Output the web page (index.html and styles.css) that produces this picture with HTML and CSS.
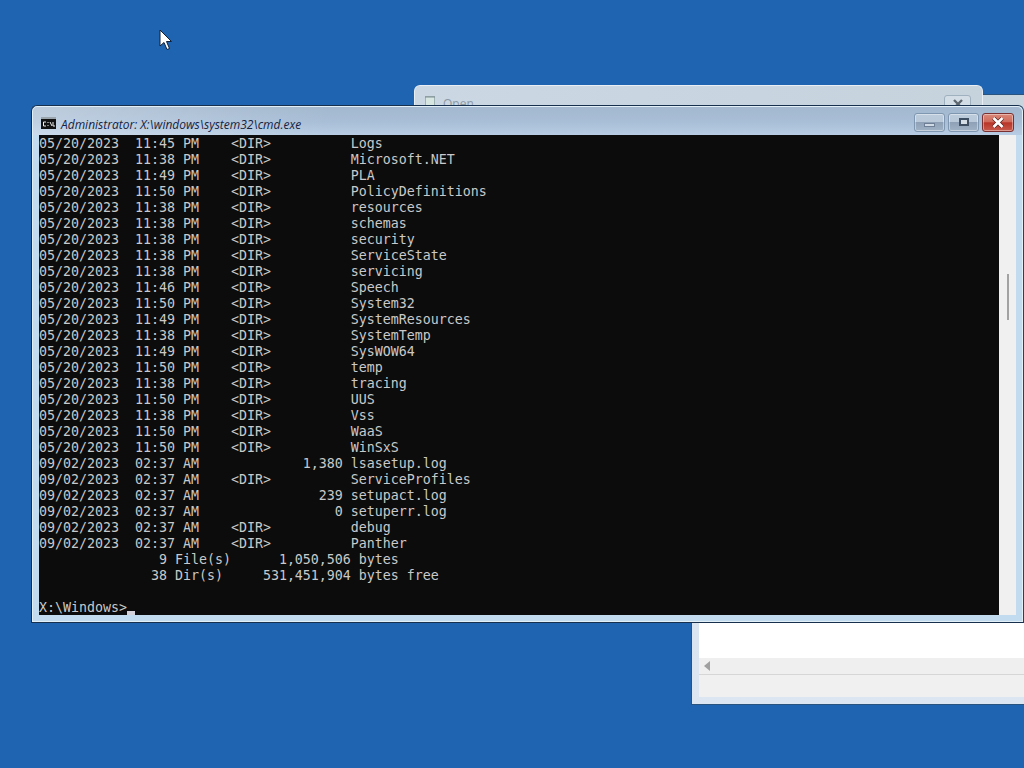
FILE: index.html
```html
<!DOCTYPE html>
<html lang="en">
<head>
<meta charset="utf-8">
<title>Administrator: X:\windows\system32\cmd.exe</title>
<link rel="stylesheet" href="styles.css">
</head>
<body>
<main class="desktop">
  <svg class="pointer" width="14" height="22" viewBox="0 0 14 22">
    <path d="M1 1V17L5 13.5L8 20.5L10.5 19.5L7.5 12.5H12.5Z" fill="#fff" stroke="#10203a" stroke-width="1"/>
  </svg>

  <section class="window back-window">
    <div class="back-pane">
      <div class="back-white"></div>
      <div class="back-scroll"><span class="arrow-left"></span></div>
      <div class="back-status"></div>
    </div>
  </section>

  <section class="window open-dialog">
    <div class="open-title">
      <svg class="open-icon" width="10" height="14" viewBox="0 0 10 14">
        <rect x="0.5" y="1.5" width="9" height="12" fill="#d8e6e2" stroke="#9fb2b4"/>
        <path d="M1 1V3M3 1V3M5 1V3M7 1V3M9 1V3" stroke="#7d8c90"/>
      </svg>
      <span class="open-text">Open</span>
      <span class="open-close">
        <svg width="12" height="10" viewBox="0 0 12 10"><path d="M2 1L10 9M10 1L2 9" stroke="#5e6670" stroke-width="2.4"/></svg>
      </span>
    </div>
  </section>

  <section class="window cmd">
    <header class="titlebar">
      <svg class="cmd-icon" width="15" height="12" viewBox="0 0 15 12">
        <rect width="15" height="12" fill="#111"/>
        <rect y="0" width="15" height="2" fill="#9aa4ad"/>
        <path d="M5 5H2.5V9H5M7 5V6M7 8V9M9 5L11 9M12 5V9H14" fill="none" stroke="#eee" stroke-width="1"/>
      </svg>
      <h1 class="title">Administrator: X:\windows\system32\cmd.exe</h1>
      <div class="controls">
        <button class="ctl"><span class="glyph-min"></span></button>
        <button class="ctl"><span class="glyph-max"></span></button>
        <button class="ctl ctl-close">
          <svg width="14" height="11" viewBox="0 0 14 11"><path d="M2.5 1L11.5 10M11.5 1L2.5 10" stroke="#5a1f1c" stroke-width="4"/><path d="M2.5 1L11.5 10M11.5 1L2.5 10" stroke="#fff" stroke-width="2.6"/></svg>
        </button>
      </div>
    </header>
    <div class="client">
      <pre class="console">05/20/2023  11:45 PM    &lt;DIR&gt;          Logs
05/20/2023  11:38 PM    &lt;DIR&gt;          Microsoft.NET
05/20/2023  11:49 PM    &lt;DIR&gt;          PLA
05/20/2023  11:50 PM    &lt;DIR&gt;          PolicyDefinitions
05/20/2023  11:38 PM    &lt;DIR&gt;          resources
05/20/2023  11:38 PM    &lt;DIR&gt;          schemas
05/20/2023  11:38 PM    &lt;DIR&gt;          security
05/20/2023  11:38 PM    &lt;DIR&gt;          ServiceState
05/20/2023  11:38 PM    &lt;DIR&gt;          servicing
05/20/2023  11:46 PM    &lt;DIR&gt;          Speech
05/20/2023  11:50 PM    &lt;DIR&gt;          System32
05/20/2023  11:49 PM    &lt;DIR&gt;          SystemResources
05/20/2023  11:38 PM    &lt;DIR&gt;          SystemTemp
05/20/2023  11:49 PM    &lt;DIR&gt;          SysWOW64
05/20/2023  11:50 PM    &lt;DIR&gt;          temp
05/20/2023  11:38 PM    &lt;DIR&gt;          tracing
05/20/2023  11:50 PM    &lt;DIR&gt;          UUS
05/20/2023  11:38 PM    &lt;DIR&gt;          Vss
05/20/2023  11:50 PM    &lt;DIR&gt;          WaaS
05/20/2023  11:50 PM    &lt;DIR&gt;          WinSxS
09/02/2023  02:37 AM             1,380 lsasetup.log
09/02/2023  02:37 AM    &lt;DIR&gt;          ServiceProfiles
09/02/2023  02:37 AM               239 setupact.log
09/02/2023  02:37 AM                 0 setuperr.log
09/02/2023  02:37 AM    &lt;DIR&gt;          debug
09/02/2023  02:37 AM    &lt;DIR&gt;          Panther
               9 File(s)      1,050,506 bytes
              38 Dir(s)     531,451,904 bytes free

X:\Windows&gt;<span class="caret"></span></pre>
      <div class="scrollbar"><span class="thumb"></span></div>
    </div>
  </section>
</main>
</body>
</html>
```
FILE: styles.css
```css
* { box-sizing: border-box; }
html, body { margin: 0; padding: 0; }
body { width: 1024px; height: 768px; overflow: hidden; background: #1f64b0; }

.desktop { position: relative; width: 1024px; height: 768px; overflow: hidden; background: #1f64b0; }

.pointer { position: absolute; left: 159px; top: 29px; }

.window { position: absolute; }

.back-window {
  left: 691px; top: 94px; width: 341px; height: 611px;
  background: linear-gradient(180deg, #c8d4de 0%, #dbe6f2 100%);
  border: 1px solid #2a5480;
  border-right: 0;
  padding: 0 0 7px 7px;
  display: flex; flex-direction: column; justify-content: flex-end;
}
.back-pane { display: flex; flex-direction: column; height: 80px; }
.back-white { height: 41px; background: #fff; flex: none; }
.back-scroll { height: 16px; background: #efefef; flex: none; display: flex; align-items: center; padding-left: 5px; }
.arrow-left { width: 0; height: 0; border-style: solid; border-width: 5px 6px 5px 0; border-color: transparent #a0a0a0 transparent transparent; }
.back-status { flex: 1; background: #f0f0f0; border-top: 1px solid #d6d6d6; }

.open-dialog {
  left: 414px; top: 85px; width: 569px; height: 60px;
  background: linear-gradient(90deg, #cbd7e3 0%, #c8d4df 60%, #c6d2dc 100%);
  border: 1px solid #e8eef4;
  border-bottom: 0;
  border-radius: 6px 6px 0 0;
}
.open-title { display: flex; align-items: flex-start; padding: 9px 11px 0 10px; }
.open-icon { flex: none; }
.open-text { margin-left: 8px; font: 12px/17px "Open Sans", sans-serif; color: #8d99a4; }
.open-close {
  margin-left: auto; width: 27px; height: 20px; display: flex; justify-content: center; align-items: flex-start; padding-top: 3px;
  border: 1px solid #9fb0bf; border-radius: 3px; background: #d3dde6;
}

.cmd {
  left: 31px; top: 105px; width: 993px; height: 518px;
  display: flex; flex-direction: column;
  background: #c2dbee;
  border: 1px solid #16304d;
  border-right-color: #23425f;
  border-radius: 6px 6px 0 0;
  box-shadow: inset 0 0 0 1px rgba(255,255,255,.55);
}
.titlebar {
  height: 28px; flex: none; display: flex; align-items: center; padding: 4px 8px 0 8px;
  background:
    linear-gradient(90deg, rgba(255,255,255,.28) 0%, rgba(255,255,255,0) 30%),
    linear-gradient(180deg, #a3b8ce 0%, #a9bfd7 55%, #b8cde3 100%);
  border-radius: 5px 5px 0 0;
  margin: 1px 1px 0;
}
.cmd-icon { flex: none; }
.title {
  margin: 3px 0 0 5px; font: italic 400 12px/16px "Open Sans", "Liberation Sans", sans-serif; color: #16233f;
}
.controls { margin-left: auto; display: flex; gap: 3px; margin-top: -2px; margin-right: 0; }
.ctl {
  width: 31px; height: 19px; padding: 0; display: flex; align-items: center; justify-content: center;
  border: 1px solid #7f97b0; border-radius: 3px;
  background: linear-gradient(180deg, #bccbdb 0%, #b9c9da 45%, #8ea1b6 50%, #9fb2c6 100%);
  box-shadow: inset 0 0 0 1px rgba(255,255,255,.4);
}
.glyph-min { display: block; width: 11px; height: 4px; margin-top: 5px; background: #d0dae6; border: 1px solid #6f8096; }
.glyph-max { display: block; width: 10px; height: 8px; margin-top: -1px; background: #d4dde6; border: 2px solid #3e4e62; }
.ctl-close {
  width: 32px;
  border-color: #7a2f30;
  background: linear-gradient(180deg, #d98878 0%, #cf6a5c 45%, #b93428 52%, #c85a4c 100%);
}
.client { display: flex; flex: 1; min-height: 0; padding: 0 7px 0 7px; }
.console {
  margin: 0; padding-top: 1px; width: 960px; height: 480px; flex: none; overflow: hidden;
  background: #0c0c0c; color: #c9c9c9;
  font: 13.29px/16px "DejaVu Sans Mono", "Liberation Mono", monospace;
}
.caret { display: inline-block; width: 8px; height: 4px; background: #d6d2dc; vertical-align: -3px; }
.scrollbar { width: 17px; height: 480px; flex: none; background: #f0f0f0; position: relative; }
.thumb { position: absolute; left: 8px; top: 139px; width: 2px; height: 46px; background: #a2a2a2; }
```
